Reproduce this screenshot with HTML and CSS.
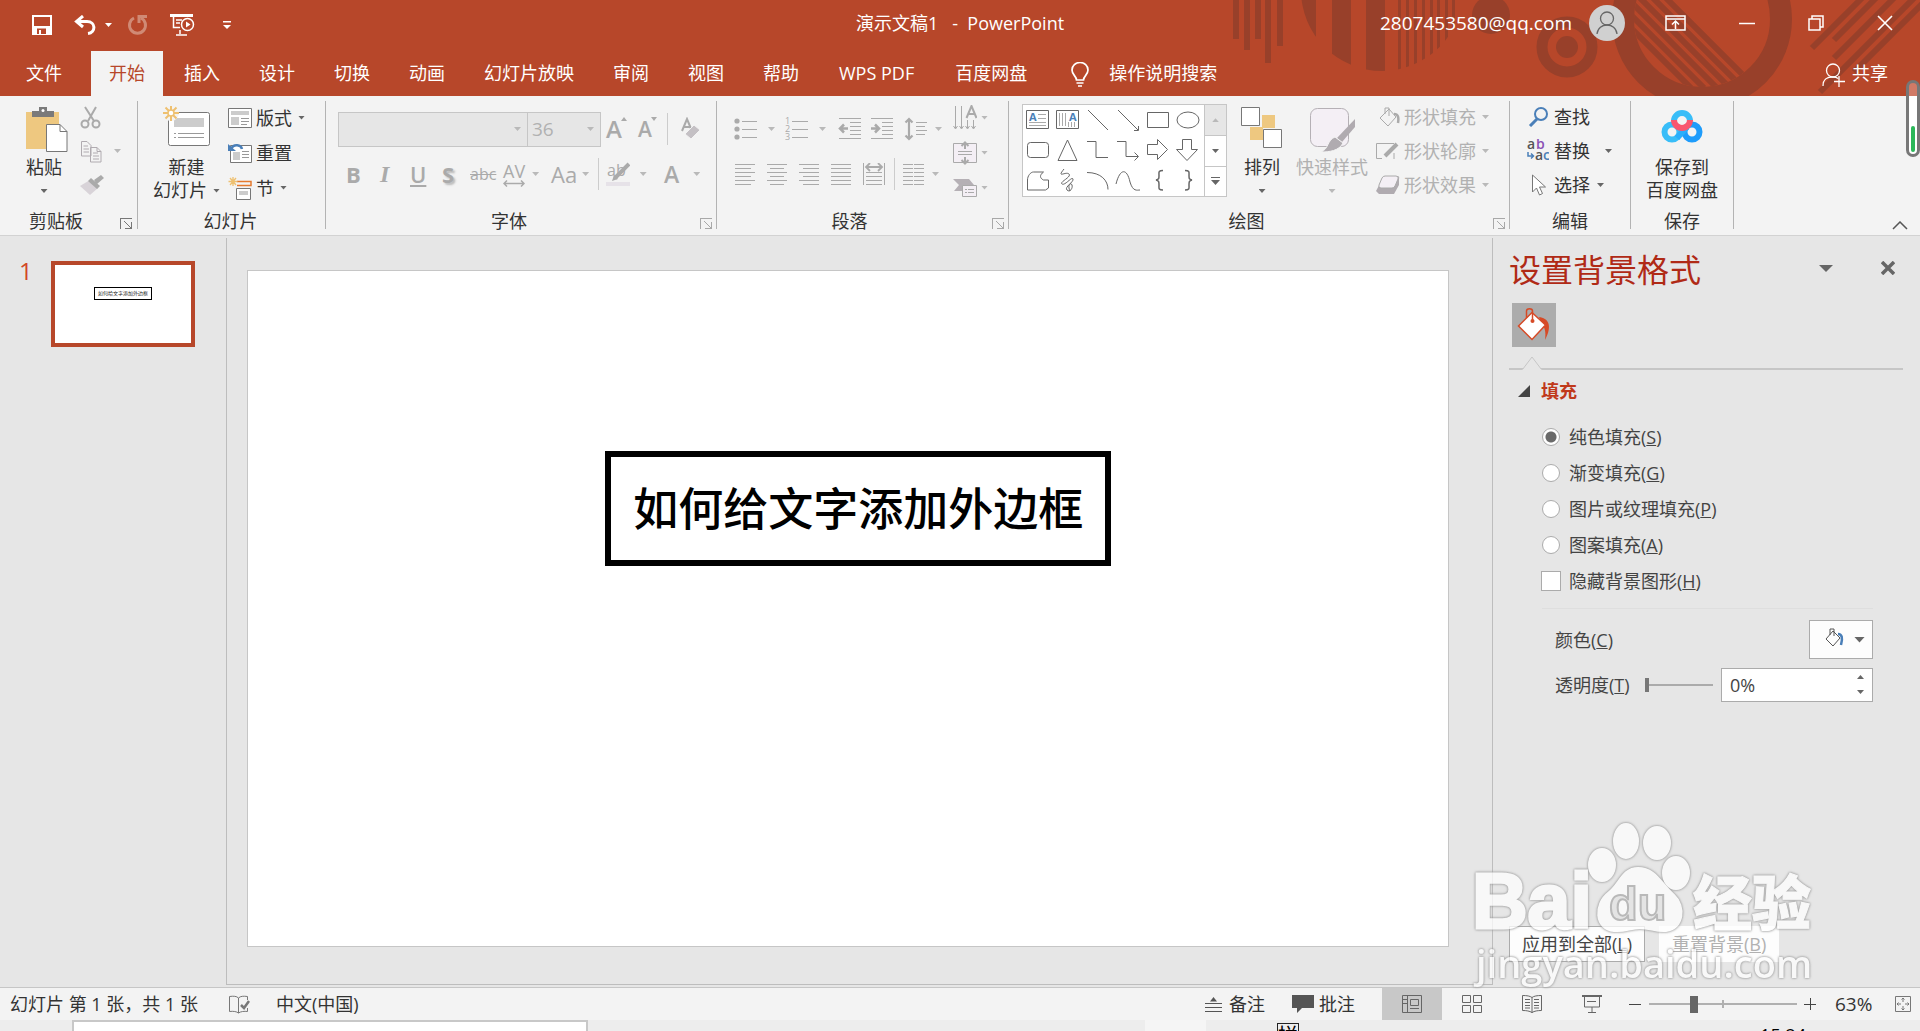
FILE: index.html
```html
<!DOCTYPE html>
<html lang="zh-CN">
<head>
<meta charset="utf-8">
<title>演示文稿1 - PowerPoint</title>
<link rel="stylesheet" href="styles.css">
</head>
<body>
<header class="top">
  <svg class="art" width="690" height="96" viewBox="0 0 690 96" aria-hidden="true">
    <defs>
      <clipPath id="c1"><circle cx="152" cy="-10" r="81"/></clipPath>
      <clipPath id="c2"><circle cx="472" cy="19" r="68"/></clipPath>
    </defs>
    <path d="M3 0h6v39H3zM14 0h6v50h-6zM25 0h6v39h-6zM35 0h6v63h-6zM47 0h6v46h-6z"/>
    <path clip-path="url(#c1)" d="M70 0h16v80H70zM102 0h19v80h-19zM136 0h19v80h-19zM168 0h3v80h-3zM176 0h3v80h-3zM184 0h3v80h-3zM192 0h3v80h-3zM200 0h3v80h-3zM207 0h3v80h-3zM215 0h3v80h-3zM222 0h3v80h-3z"/>
    <circle cx="261" cy="15" r="19"/>
    <circle cx="337" cy="47" r="25" class="ring"/>
    <circle cx="337" cy="47" r="11"/>
    <circle cx="472" cy="19" r="79" class="big"/>
    <g clip-path="url(#c2)" class="diag"><path d="M436-2l90 90M423-2l90 90M410-2l90 90M397-2l90 90M384-2l90 90M371-2l90 90"/></g>
    <path class="diag" d="M632-2l-50 50M646-2l-42 42M664-2l-60 60M690-8l-100 100M704-8l-80 80"/>
  </svg>
  <div class="titlebar">
    <div class="quick">
      <button aria-label="保存"><svg width="20" height="20" viewBox="0 0 20 20"><path d="M0 0h20v20H0z" fill="#fff"/><path d="M2 2h16v9H2zM5 13.500h9V19H9v-4H7v4H5z" fill="#b7472a"/></svg></button>
      <button aria-label="撤消"><svg width="23" height="20" viewBox="0 0 23 20" fill="none" stroke="#fff" stroke-width="3"><path d="M3 6.500h10c9 0 9 11 1 12M9 1L2.500 6.500 9 12"/></svg></button>
      <i class="car white"></i>
      <button aria-label="恢复"><svg width="21" height="20" viewBox="0 0 21 20" fill="none" stroke="#d08a75" stroke-width="3"><path d="M7 3a8 8 0 1 0 7 0M12 8V1.500h8"/></svg></button>
      <button aria-label="从头开始"><svg width="25" height="22" viewBox="0 0 25 22" fill="none" stroke="#fff" stroke-width="1.500"><path d="M0 1.500h23" stroke-width="3"/><path d="M3.500 3v10.500H10M6 6h6M6 9h4M10 16v4M6 21h11"/><circle cx="17.500" cy="10.500" r="6"/><path d="M16 7.500v6l4.500-3z" fill="#fff" stroke="none"/></svg></button>
      <button aria-label="自定义快速访问工具栏"><svg width="8" height="8" viewBox="0 0 8 8" fill="#fff"><path d="M0 0h8v1.500H0zM0 4h8L4 8z"/></svg></button>
    </div>
    <div class="doc">演示文稿1&nbsp;&nbsp; -&nbsp; PowerPoint</div>
    <div class="account">
      <span class="mail">2807453580@qq.com</span>
      <svg class="avatar" width="36" height="36" viewBox="0 0 36 36"><circle cx="18" cy="18" r="18" fill="#d0d0d0"/><g fill="none" stroke="#666" stroke-width="1.300"><circle cx="18" cy="13.500" r="6.500"/><path d="M8 29c1-12 19-12 20 0"/></g></svg>
      <button aria-label="功能区显示选项"><svg width="21" height="16" viewBox="0 0 21 16" fill="none" stroke="#fff" stroke-width="1.500"><path d="M1 1h19v14H1zM1 4h19M10.500 14V6M7 9.500L10.500 6 14 9.500"/></svg></button>
      <button aria-label="最小化"><svg width="16" height="16" viewBox="0 0 16 16" stroke="#fff" stroke-width="1.500"><path d="M0 8.500h16"/></svg></button>
      <button aria-label="还原"><svg width="16" height="16" viewBox="0 0 16 16" fill="none" stroke="#fff" stroke-width="1.500"><path d="M1 4h11v11H1zM4 4V1h11v11h-3"/></svg></button>
      <button aria-label="关闭"><svg width="16" height="16" viewBox="0 0 16 16" stroke="#fff" stroke-width="1.600"><path d="M1 1l14 14M15 1L1 15"/></svg></button>
    </div>
  </div>
  <nav class="tabs">
    <button class="file">文件</button>
    <button class="on">开始</button><button>插入</button><button>设计</button><button>切换</button><button>动画</button><button>幻灯片放映</button><button>审阅</button><button>视图</button><button>帮助</button><button class="addin">WPS PDF</button><button class="addin">百度网盘</button>
    <button class="tell"><svg width="18" height="25" viewBox="0 0 18 25" fill="none" stroke="#fff" stroke-width="1.700"><path d="M5.500 18c0-4-4.500-5-4.500-10a8 7.500 0 0 1 16 0c0 5-4.500 6-4.500 10zM5.500 21h7M7 24h4"/></svg>操作说明搜索</button>
    <button class="share"><svg width="24" height="24" viewBox="0 0 24 24" fill="none" stroke="#fff" stroke-width="1.300"><circle cx="11" cy="7.500" r="6.500"/><path d="M1 23c0-8 5-9 10-9 2 0 4 .5 5 1.500M17 13v11M12 18.500h11"/></svg>共享</button>
  </nav>
</header>

<section class="ribbon" aria-label="开始">
  <div class="group clip">
    <div class="body">
      <button class="large"><svg width="42" height="46" viewBox="0 0 42 46"><path d="M0 6h33v37H0z" fill="#eec880"/><path d="M6 11V5h7V1h8v4h7v6z" fill="#7a7a7a"/><circle cx="17" cy="4.500" r="1.500" fill="#fff"/><path d="M20.500 18.500H34l7 7V45.500H20.500z" fill="#fff" stroke="#777"/><path d="M34 18.500v7h7" fill="none" stroke="#777"/></svg>粘贴<i class="car"></i></button>
      <div class="stack">
        <button class="row off" aria-label="剪切"><svg width="22" height="23" viewBox="0 0 22 23" fill="none" stroke="#aaa" stroke-width="2"><path d="M5 1l9 14M16 1L8 15"/><circle cx="5" cy="18" r="3.500"/><circle cx="16" cy="18" r="3.500"/></svg></button>
        <button class="row off" aria-label="复制"><svg width="22" height="23" viewBox="0 0 22 23" fill="#f3f3f3" stroke="#b0abb0"><path d="M1.500 1.500H7l4 4V16H1.500zM10.500 7.500H17l4 4v10.500H10.500zM17 7.500v4h4M13 13h5M13 16h6M13 19h6M3.500 6H8M3.500 9H9M3.500 12H9"/></svg><i class="car"></i></button>
        <button class="row off" aria-label="格式刷"><svg width="24" height="22" viewBox="0 0 24 22"><path d="M10 6l8 8-8 7L0 12z" fill="#d8d3d8"/><path d="M8 7l3-3 9 8-3 3zM14 6l7-5 3 3-7 6z" fill="#aaa"/></svg></button>
      </div>
    </div>
    <h3>剪贴板</h3><i class="launch"></i>
  </div>
  <div class="group slides">
    <div class="body">
      <button class="large"><svg width="48" height="46" viewBox="0 0 48 46"><rect x="5.500" y="6.500" width="41" height="33" rx="2" fill="#fff" stroke="#777"/><path d="M11 12h30v9H11z" fill="#ccc"/><path d="M11 27.500h2M15 27.500h26M11 31.500h2M15 31.500h26" stroke="#999"/><circle cx="8" cy="7" r="8" fill="#f3f3f3"/><path d="M8-1v16M0 7h16M2.500 1.500l11 11M13.500 1.500l-11 11" stroke="#eec070" stroke-width="2"/><circle cx="8" cy="7" r="3" fill="#fff" stroke="#eec070" stroke-width="1.500"/></svg>新建<span>幻灯片<i class="car"></i></span></button>
      <div class="stack">
        <button class="row"><svg width="24" height="20" viewBox="0 0 24 20"><path d="M.5.5h23v19H.5z" fill="#fff" stroke="#777"/><path d="M3 3h18v4H3zM3 9h8v8H3z" fill="#ccc"/><path d="M13 10.500h8M13 13.500h8M13 16.500h6" stroke="#999"/></svg>版式<i class="car"></i></button>
        <button class="row"><svg width="24" height="20" viewBox="0 0 24 20"><path d="M2.500 2.500h21v17h-21z" fill="#fff" stroke="#777"/><path d="M5 9h7v8H5z" fill="#ccc"/><path d="M14 8.500h7M14 11.500h7M14 14.500h7" stroke="#999"/><path d="M3 6c3-6 10-4 11 0" fill="none" stroke="#4a7fb8" stroke-width="2.500"/><path d="M0 1v7h8z" fill="#4a7fb8"/></svg>重置</button>
        <button class="row"><svg width="24" height="24" viewBox="0 0 24 24"><path d="M9 5.500h14v4H9" fill="none" stroke="#e57a2e" stroke-width="1.500"/><path d="M8.500 12.500h14v11h-14z" fill="#fff" stroke="#777"/><path d="M11 15h9v4h-9z" fill="#ccc"/><path d="M5 1v9M.5 5.500h9M2 2l6 7M8 2L2 9" stroke="#eec070" stroke-width="1.300"/></svg>节<i class="car"></i></button>
      </div>
    </div>
    <h3>幻灯片</h3>
  </div>
  <div class="group font off">
    <div class="tools">
      <div class="line1">
        <select class="combo" aria-label="字体" disabled><option></option></select><select class="combo" aria-label="字号" disabled><option>36</option></select>
        <button class="g26" aria-label="增大字号">A<svg width="6" height="4" viewBox="0 0 6 4"><path d="M0 4h6L3 0z" fill="#aaa"/></svg></button>
        <button class="g22" aria-label="减小字号">A<svg width="6" height="4" viewBox="0 0 6 4"><path d="M0 0h6L3 4z" fill="#aaa"/></svg></button>
        <i class="vline"></i>
        <button aria-label="清除所有格式"><svg width="20" height="24" viewBox="0 0 20 24"><path d="M1 14L6 2l5 12M3 10h6" fill="none" stroke="#aaa" stroke-width="2"/><path d="M13 8l6 5-9 9-6-5z" fill="#c4c0c4" stroke="#f3f3f3"/></svg></button>
      </div>
      <div class="line2">
        <button class="b">B</button><button class="it">I</button><button class="u">U</button><button class="s">S</button><button class="abc">abc</button>
        <button class="av"><span>AV<svg width="22" height="7" viewBox="0 0 22 7" fill="none" stroke="#aaa" stroke-width="1.500"><path d="M1 3.500h20M4 .5l-3 3 3 3M18 .5l3 3-3 3"/></svg></span><i class="car"></i></button>
        <button class="aa">Aa<i class="car"></i></button><i class="vline"></i>
        <button class="hl" aria-label="文本突出显示颜色"><span>ab</span><svg width="24" height="24" viewBox="0 0 24 24"><path d="M23 2l-14 14" stroke="#aaa" stroke-width="4"/><path d="M8 13l4 4-6 2z" fill="#aaa"/><path d="M0 20h24v4H0z" fill="#e6e2e8"/></svg><i class="car"></i></button>
        <button class="fc">A<i class="car"></i></button>
      </div>
    </div>
    <h3>字体</h3><i class="launch"></i>
  </div>
  <div class="group para off">
    <div class="body">
      <div class="tools">
        <div class="line1">
          <button aria-label="项目符号"><svg width="23" height="22" viewBox="0 0 23 22"><g fill="#aaa"><circle cx="3" cy="3" r="2.600"/><circle cx="3" cy="11" r="2.600"/><circle cx="3" cy="19" r="2.600"/></g><path d="M8 3.500h15M8 11.500h15M8 19.500h15" stroke="#aaa"/></svg><i class="car"></i></button>
          <button aria-label="编号"><svg width="23" height="24" viewBox="0 0 23 24"><text x="0" y="7" class="num">1</text><text x="0" y="15" class="num">2</text><text x="0" y="23" class="num">3</text><path d="M7 4.500h16M7 12.500h16M7 20.500h16" stroke="#aaa"/></svg><i class="car"></i></button>
          <button aria-label="降低列表级别"><svg width="23" height="22" viewBox="0 0 23 22" stroke="#aaa"><path d="M1 .5h22M12 4.500h11M12 8.500h11M12 12.500h11M12 16.500h11M1 20.500h22"/><path d="M10 10.500H2M6 6.500l-4 4 4 4" fill="none" stroke-width="2.500"/></svg></button>
          <button aria-label="提高列表级别"><svg width="23" height="22" viewBox="0 0 23 22" stroke="#aaa"><path d="M1 .5h22M12 4.500h11M12 8.500h11M12 12.500h11M12 16.500h11M1 20.500h22"/><path d="M1 10.500h8M5 6.500l4 4-4 4" fill="none" stroke-width="2.500"/></svg></button>
          <button aria-label="行距"><svg width="24" height="24" viewBox="0 0 24 24" stroke="#aaa"><path d="M12 5.500h11M12 9.500h9M12 13.500h11M12 17.500h9"/><path d="M5 2v20M1.500 5.500L5 2l3.500 3.500M1.500 18.500L5 22l3.500-3.500" fill="none" stroke-width="2.200"/></svg><i class="car"></i></button>
        </div>
        <div class="line2">
          <button aria-label="左对齐"><svg width="20" height="21" viewBox="0 0 20 21" stroke="#aaa"><path d="M0 .5h20M0 4.500h16M0 8.500h20M0 12.500h16M0 16.500h20M0 20.500h16"/></svg></button>
          <button aria-label="居中"><svg width="20" height="21" viewBox="0 0 20 21" stroke="#aaa"><path d="M0 .5h20M3 4.500h14M0 8.500h20M3 12.500h14M0 16.500h20M3 20.500h14"/></svg></button>
          <button aria-label="右对齐"><svg width="20" height="21" viewBox="0 0 20 21" stroke="#aaa"><path d="M0 .5h20M4 4.500h16M0 8.500h20M4 12.500h16M0 16.500h20M4 20.500h16"/></svg></button>
          <button aria-label="两端对齐"><svg width="20" height="21" viewBox="0 0 20 21" stroke="#aaa"><path d="M0 .5h20M0 4.500h20M0 8.500h20M0 12.500h20M0 16.500h20M0 20.500h20"/></svg></button>
          <button aria-label="分散对齐"><svg width="22" height="22" viewBox="0 0 22 22" stroke="#aaa" fill="none"><path d="M.5 0v22M21.500 0v22M3 9.500h16M3 13.500h16M3 17.500h16M3 21.500h16"/><path d="M3 4h16M7 0L3 4l4 4M15 0l4 4-4 4" stroke-width="1.800"/></svg></button>
          <i class="vline"></i>
          <button aria-label="分栏"><svg width="21" height="21" viewBox="0 0 21 21" stroke="#aaa"><path d="M0 .5h10M0 4.500h10M0 8.500h10M0 12.500h10M0 16.500h10M0 20.500h10M11 .5h10M11 4.500h10M11 8.500h10M11 12.500h10M11 16.500h10M11 20.500h10"/></svg><i class="car"></i></button>
        </div>
      </div>
      <div class="stack">
        <button class="row" aria-label="文字方向"><svg width="24" height="26" viewBox="0 0 24 26" fill="none" stroke="#aaa"><path d="M2.500 1v22M8.500 1v22M14.500 15v8M20.500 15v8M.5 21l2 3 2-3M6.500 21l2 3 2-3M12.500 21l2 3 2-3M18.500 21l2 3 2-3"/><path d="M13.500 13l5-12 5 12M15 9h7" stroke-width="2"/></svg><i class="car"></i></button>
        <button class="row" aria-label="对齐文本"><svg width="24" height="24" viewBox="0 0 24 24" fill="none" stroke="#aaa"><path d="M.5 2.500h23v19H.5z" fill="#f4eff5"/><path d="M5 10.500h14M5 13.500h14"/><path d="M12 8V2M8.500 5L12 1.500 15.500 5M12 16v6M8.500 19l3.500 3.500 3.500-3.500" stroke-width="2"/></svg><i class="car"></i></button>
        <button class="row" aria-label="转换为 SmartArt"><svg width="24" height="18" viewBox="0 0 24 18"><path d="M0 0h16l5 6H10v6H1l5-6z" fill="#b5b0b5"/><path d="M9.500 6.500h14v11h-14z" fill="#f4eff5" stroke="#aaa"/><path d="M12 10.500h2M15 10.500h6M12 13.500h2M15 13.500h6" stroke="#aaa"/></svg><i class="car"></i></button>
      </div>
    </div>
    <h3>段落</h3><i class="launch"></i>
  </div>
  <div class="group draw">
    <div class="body">
      <div class="gallery">
        <svg width="181" height="92" viewBox="1 0 181 92" fill="none" stroke="#666" stroke-width="1">
          <path d="M4.500 5.500h22v18h-22zM34.500 5.500h22v18h-22z"/>
          <path d="M16 9.500h8M16 13.500h8M7 17.500h17M7 20.500h17M37.500 8v13M40.500 8v13M43.500 8v13M46.500 17v5M49.500 17v5M52.500 17v5" stroke="#aaa"/>
          <text x="7" y="16" class="ga">A</text><text x="47" y="16" class="ga">A</text>
          <path d="M66 5l20 20M96 5l20 20M116.500 21v4.500H112M125.500 7.500h21v15h-21z"/><ellipse cx="166" cy="15" rx="11" ry="8"/>
          <rect x="5.500" y="37.500" width="21" height="15" rx="3"/><path d="M36 55.500L45.500 35 55 55.500zM65 36.500h9v16h12M95 36.500h9v15h12M112.500 47.500l4 4-4 4M125.500 39.500h10v-5l10 10-10 10v-5h-10zM160.500 34.500h9v10h6l-10.500 11-10.500-11h6z"/>
          <path d="M5.500 85V75c0-4 3-8 6-8h10c-4 3-4 6 0 8h5v8l-3 2zM42 64c-8 10 2 2 5 5s-10 8-7 10 10-8 11-5-9 8-6 11 6-2 5-5-5 0-2 6M65 67.500c14 0 21 8 21 17M94 79c4-16 11-16 14-2 3 10 7 8 10 8"/>
          <path d="M141 65.500c-5 0-4 2-4 5s0 4-3 4.500c3 .5 3 2 3 5s-1 5 4 5M163 65.500c5 0 4 2 4 5s0 4 3 4.500c-3 .5-3 2-3 5s1 5-4 5" stroke-width="1.500"/>
        </svg>
        <div class="gscroll"><button class="dis" aria-label="上一行"><i class="car up"></i></button><button aria-label="下一行"><i class="car"></i></button><button aria-label="其他"><svg width="9" height="8" viewBox="0 0 9 8" fill="#666"><path d="M0 0h9v1H0zM0 3h9L4.500 8z"/></svg></button></div>
      </div>
      <button class="large"><svg width="42" height="46" viewBox="0 0 42 46"><path d="M21 9h13v13H21zM9 21h13v13H9z" fill="#eec880"/><path d="M.5 1.500h18v18H.5zM22.500 23.500h18v18h-18z" fill="#fff" stroke="#777"/></svg>排列<i class="car"></i></button>
      <button class="large off"><svg width="46" height="46" viewBox="0 0 46 46"><rect x="1.500" y="2.500" width="38" height="38" rx="7" fill="#f4eff5" stroke="#b5b0b5"/><path d="M46 13v8L33 36l-5-4z" fill="#b0abb0"/><path d="M26 31l8 6c-4 8-14 9-22 9 8-3 6-12 14-15z" fill="#b0abb0" stroke="#f3f3f3"/></svg>快速样式<i class="car"></i></button>
      <div class="stack off">
        <button class="row"><svg width="24" height="22" viewBox="0 0 24 22" fill="none" stroke="#aaa"><path d="M13 3L4 12l8 8 8-9zM9 8V2h4v8"/><path d="M18 8c4 0 5 3 4 9" stroke-width="2.500"/></svg>形状填充<i class="car"></i></button>
        <button class="row"><svg width="24" height="20" viewBox="0 0 24 20" fill="none" stroke="#aaa"><path d="M18 2.500H.500v15H6M18 12v6"/><path d="M9 15L21 3" stroke-width="4"/></svg>形状轮廓<i class="car"></i></button>
        <button class="row"><svg width="24" height="20" viewBox="0 0 24 20"><path d="M8 1h13q3 0 2 3v6l-5 9H3l-3-3z" fill="#b0abb0"/><path d="M9 1h11q3 0 2 3l-3 7q-1 2-3 2H5q-3 0-2-3l3-7q1-2 3-2z" fill="#f4eff5" stroke="#aaa"/></svg>形状效果<i class="car"></i></button>
      </div>
    </div>
    <h3>绘图</h3><i class="launch dim"></i>
  </div>
  <div class="group edit">
    <div class="body">
      <div class="stack">
        <button class="row"><svg width="22" height="20" viewBox="0 0 22 20" fill="none" stroke="#4a7fb8"><circle cx="14" cy="7" r="6" stroke-width="2"/><path d="M10 12l-7 7" stroke-width="3"/></svg>查找</button>
        <button class="row"><svg width="22" height="24" viewBox="0 0 22 24" class="rep"><text x="0" y="10" fill="#555">a</text><text x="9" y="10" fill="#8a50b5">b</text><text x="8" y="21" fill="#555">a</text><text x="16" y="21" fill="#4a7fb8">c</text><path d="M1 13v4h5M4 14.500L6.500 17 4 19.500" fill="none" stroke="#4a7fb8" stroke-width="1.500"/></svg>替换<i class="car far"></i></button>
        <button class="row"><svg width="22" height="24" viewBox="0 0 22 24"><path d="M5.500 2v17l4-4 3 7 3-1.500-3-6.500h6z" fill="#fff" stroke="#777"/></svg>选择<i class="car"></i></button>
      </div>
    </div>
    <h3>编辑</h3>
  </div>
  <div class="group save">
    <div class="body">
      <button class="large"><svg width="42" height="46" viewBox="0 0 42 46" fill="none" stroke-width="6"><circle cx="11" cy="26" r="7.500" stroke="#38bdf8"/><circle cx="31" cy="26" r="7.500" stroke="#1e9cfb"/><path d="M16 32l10-11" stroke="#2aaefb"/><path d="M13 15a8 8 0 0 1 16 0" stroke="#38bdf8"/><path d="M13 14a8 8 0 0 0 16 0" stroke="#f9566f"/></svg>保存到<span>百度网盘</span></button>
    </div>
    <h3>保存</h3>
  </div>
  <button class="collapse" aria-label="折叠功能区"><svg width="16" height="9" viewBox="0 0 16 9" fill="none" stroke="#555" stroke-width="1.500"><path d="M1 8l7-7 7 7"/></svg></button>
</section>

<main class="work">
  <aside class="thumbs"><span>1</span><div class="thumb"><div>如何给文字添加外边框</div></div></aside>
  <section class="canvas"><div class="slide"><div class="textbox">如何给文字添加外边框</div></div></section>
  <aside class="pane">
    <div class="phead"><h2>设置背景格式</h2><button aria-label="任务窗格选项"><svg width="14" height="7" viewBox="0 0 14 7"><path d="M0 0h14L7 7z" fill="#666"/></svg></button><button aria-label="关闭"><svg width="14" height="14" viewBox="0 0 14 14" stroke="#666" stroke-width="3.500"><path d="M1 1l12 12M13 1L1 13"/></svg></button></div>
    <button class="tile" aria-label="填充"><svg width="44" height="44" viewBox="0 0 44 44"><path d="M27 14c9 1 14 8 6 23 1-8 0-12-3-16z" fill="#d64a26"/><path d="M20 9.500L6.500 23 20 36.500 33.500 22z" fill="#fff" stroke="#d64a26" stroke-width="1.500"/><path d="M14.500 15V8c0-3 6-3 6 0v9" fill="none" stroke="#d64a26" stroke-width="1.500"/><circle cx="20.500" cy="18" r="2" fill="#d64a26"/></svg></button>
    <div class="notch"><svg width="20" height="14" viewBox="0 0 20 14"><path d="M0 14L10 1l10 13z" fill="#e6e6e6"/><path d="M.5 13.500L10 1l9.500 12.500" fill="none" stroke="#c6c6c6"/></svg></div>
    <div class="sect"><svg width="12" height="12" viewBox="0 0 12 12"><path d="M12 0v12H0z" fill="#444"/></svg>填充</div>
    <form class="opts">
      <label><input type="radio" name="f" checked><span>纯色填充(<u>S</u>)</span></label>
      <label><input type="radio" name="f"><span>渐变填充(<u>G</u>)</span></label>
      <label><input type="radio" name="f"><span>图片或纹理填充(<u>P</u>)</span></label>
      <label><input type="radio" name="f"><span>图案填充(<u>A</u>)</span></label>
      <label><input type="checkbox"><span>隐藏背景图形(<u>H</u>)</span></label>
      <hr>
      <div class="field"><span>颜色(<u>C</u>)</span><button type="button" class="color" aria-label="颜色"><svg width="22" height="22" viewBox="0 0 22 22" fill="none" stroke="#555"><path d="M10 4L3 12l7 7 7-8zM7 8V2h4v7"/><path d="M15 7c4 0 5 4 3 11" stroke="#4a7fb8" stroke-width="2.500"/></svg><i class="car"></i></button></div>
      <div class="field"><label for="tr">透明度(<u>T</u>)</label><input type="range" id="tr" value="0"><div class="spin"><input type="text" value="0%" aria-label="透明度"><div><i class="car up"></i><i class="car"></i></div></div></div>
    </form>
    <div class="pfoot"><button>应用到全部(<u>L</u>)</button><button class="dis" disabled>重置背景(<u>B</u>)</button></div>
    <svg class="mark" width="350" height="175" viewBox="0 0 350 175" aria-hidden="true">
      <text x="5" y="112" class="m1">Bai</text>
      <text x="226" y="109" class="m2">经验</text>
      <text x="9" y="162" class="m3">jingyan.baidu.com</text>
      <g class="paw"><ellipse cx="135" cy="49" rx="13" ry="16"/><ellipse cx="159" cy="25" rx="12" ry="17"/><ellipse cx="190" cy="27" rx="13" ry="16"/><ellipse cx="209" cy="57" rx="13" ry="16"/><path d="M171 52c-16 0-18 16-30 25-14 11-14 36 6 38 12 1 16-3 26-3s16 4 26 3c18-2 20-25 8-36-13-11-18-27-36-27z"/></g>
      <text x="142" y="104" class="m4">du</text>
    </svg>
  </aside>
</main>

<footer class="status">
  <span class="count">幻灯片 第 1 张，共 1 张</span>
  <svg width="21" height="19" viewBox="0 0 21 19" fill="none" stroke="#777"><path d="M9.500 18V3c-2-2-5-2-9-1.500v15c4-.500 7 0 9 1.500 2-1.500 6-2 9-1.500V13M9.500 3c2-2 5-2 9-1.500V5"/><path d="M12 10l3 3 5-7" stroke-width="2.500"/></svg>
  <span class="lang">中文(中国)</span>
  <div class="right">
    <button><svg width="17" height="15" viewBox="0 0 17 15" stroke="#555"><path d="M0 6.500h17M0 10.500h17M0 14.500h17"/><path d="M5 4.500h7L8.500 0z" fill="#555" stroke="none"/></svg>备注</button>
    <button class="cm"><svg width="22" height="18" viewBox="0 0 22 18"><path d="M0 0h22v13H10l-5 5v-5H0z" fill="#555"/></svg>批注</button>
    <button class="view on" aria-label="普通"><svg width="20" height="18" viewBox="0 0 20 18" fill="none" stroke="#666"><path d="M.5.5h19v17H.5zM5.500 1v16M8.500 4.500h8v6h-8zM8 13.500h9M1 4.500h4M1 8.500h4"/></svg></button>
    <button class="view" aria-label="幻灯片浏览"><svg width="20" height="18" viewBox="0 0 20 18" fill="none" stroke="#666"><path d="M.5.5h8v7h-8zM11.500.5h8v7h-8zM.5 10.500h8v7h-8zM11.500 10.500h8v7h-8z"/></svg></button>
    <button class="view" aria-label="阅读视图"><svg width="20" height="18" viewBox="0 0 20 18" fill="none" stroke="#666"><path d="M10 2.500C8 1 5 .5.500.5v15c4 0 7 .500 9.500 2 2.500-1.500 5.500-2 9.500-2V.5C15 .5 12 1 10 2.500zV18M3 4.500h5M3 7.500h5M3 10.500h5M3 13h5M12 4.500h5M12 7.500h5M12 10.500h5M12 13h5"/></svg></button>
    <button class="view" aria-label="幻灯片放映"><svg width="20" height="18" viewBox="0 0 20 18" fill="none" stroke="#666"><path d="M0 1h20" stroke-width="2"/><path d="M2.500 2v10h15V2M5 6.500h9M10 12v5M6 17.500h8"/></svg></button>
    <button class="z" aria-label="缩小"><svg width="12" height="12" viewBox="0 0 12 12" stroke="#444"><path d="M0 6.500h12"/></svg></button>
    <input type="range" class="zoom" aria-label="显示比例" min="0" max="100" value="29">
    <button class="z" aria-label="放大"><svg width="12" height="12" viewBox="0 0 12 12" stroke="#444"><path d="M0 6.500h12M6.500 0v12"/></svg></button>
    <span class="pct">63%</span>
    <button class="z" aria-label="适应窗口"><svg width="16" height="16" viewBox="0 0 16 16" fill="none" stroke="#777"><path d="M.5.5h15v15H.5zM8 2v4M8 10v4M2 8h4M10 8h4M6.500 3.500L8 2l1.500 1.500M6.500 12.500L8 14l1.500-1.500M3.500 6.500L2 8l1.500 1.500M12.500 6.500L14 8l-1.500 1.500"/></svg></button>
  </div>
</footer>
<div class="taskbar"><input type="text" aria-label="搜索"><i class="lit"></i><span class="ime">拼</span><span class="clock">15:24</span></div>
<div class="meter" aria-hidden="true"><i></i></div>
</body>
</html>
```
FILE: styles.css
```css
* { box-sizing: border-box; }
body { margin: 0; height: 100vh; overflow: hidden; display: flex; flex-direction: column; position: relative; font: 18px/24px "Open Sans", "Noto Sans CJK SC", sans-serif; color: #333; background: #e6e6e6; }
button { font: inherit; color: inherit; background: none; border: 0; padding: 0; margin: 0; display: flex; align-items: center; white-space: nowrap; }
svg { display: block; flex: none; }
h2, h3 { margin: 0; font-weight: 400; }
.car { display: block; flex: none; width: 7px; height: 4px; background: #666; clip-path: polygon(0 0, 100% 0, 50% 100%); }
.car.up { clip-path: polygon(50% 0, 100% 100%, 0 100%); }
.car.white { background: #fff; }
.off { color: #b1b1b1; }
.off .car, .dis .car { background: #b9b9b9; }

/* title bar and tabs */
.top { position: relative; flex: none; background: #b7472a; color: #fff; }
.art { position: absolute; right: 0; top: 0; fill: #98402a; }
.art .ring { fill: none; stroke: #98402a; stroke-width: 11; }
.art .big { fill: none; stroke: #98402a; stroke-width: 22; }
.art .diag { fill: none; stroke: #98402a; stroke-width: 6; }
.titlebar { position: relative; height: 51px; padding-bottom: 5px; display: grid; grid-template-columns: 1fr auto 1fr; align-items: center; }
.quick { display: flex; align-items: center; padding: 4px 0 0 32px; gap: 22px; }
.quick .car { margin: 0 -7px 0 -14px; }
.quick button:last-child { margin-left: 6px; }
.account { display: flex; align-items: center; justify-content: flex-end; padding-right: 27px; gap: 53px; }
.account .mail { margin-right: -36px; font-size: 19px; }
.account .avatar { margin-right: -13px; }
.tabs { position: relative; height: 45px; display: flex; gap: 3px; }
.tabs button { padding: 0 18px 2px; }
.tabs .file { padding: 0 26px 2px; }
.tabs .addin { padding: 0 19px 2px; }
.tabs .on { background: #f3f3f3; color: #b7472a; }
.tabs .tell { gap: 20px; margin-left: 4px; }
.tabs svg { margin-top: 4px; }
.tabs .share { margin-left: auto; gap: 6px; padding: 0 32px 2px 0; }

/* ribbon */
.ribbon { flex: none; display: flex; height: 140px; background: #f3f3f3; border-bottom: 1px solid #d2d2d2; }
.group { position: relative; display: flex; flex-direction: column; background: linear-gradient(#b3b3b3, #b3b3b3) right 5px / 1px 128px no-repeat; }
.group h3 { font-size: 18px; line-height: 28px; text-align: center; color: #333; }
.body { display: flex; height: 111px; }
.group > .tools { height: 111px; }
.launch { position: absolute; right: 5px; bottom: 6px; width: 12px; height: 11px; border: 1px solid #777; border-width: 1px 0 0 1px; background: linear-gradient(to top right, transparent 44%, #777 44% 56%, transparent 56%) 3px 2px / 7px 7px no-repeat, linear-gradient(#777, #777) 10px 3px / 1px 7px no-repeat, linear-gradient(#777, #777) 4px 9px / 7px 1px no-repeat; }
.off > .launch, .launch.dim { opacity: .6; }
.large { flex-direction: column; align-items: center; padding-top: 10px; line-height: 23px; }
.large svg { margin-bottom: 4px; }
.large > .car { margin-top: 10px; }
.large span { display: flex; align-items: center; gap: 6px; }
.stack { padding-top: 4px; }
.row { height: 34px; gap: 6px; }
.slides .row, .para .row { height: 35px; }
.row svg { margin-right: -2px; }
.tools { padding-top: 15px; display: grid; grid-template-rows: 36px 36px; row-gap: 9px; }
.line1, .line2 { display: flex; align-items: center; }
.line1 button, .line2 button { gap: 11px; flex: none; }
.vline { width: 1px; height: 32px; background: #ccc; }

.clip { width: 138px; padding-left: 20px; }
.clip h3 { padding-right: 46px; }
.clip .body { gap: 12px; }
.clip .large svg { margin-left: 6px; }
.clip .row .car { margin-left: 8px; }
.clip > .launch { right: 6px; }
.slides { width: 188px; padding-left: 15px; }
.slides h3 { padding-right: 18px; }
.slides .body { gap: 8px; }

.font { width: 391px; padding-left: 12px; }
.font h3 { padding-right: 37px; }
.combo { appearance: none; width: 190px; height: 35px; margin: 0 -1px 0 0; padding: 0 4px; border: 1px solid #c6c6c6; border-radius: 0; color: #b1b1b1; opacity: 1; font: inherit; background: #e6e6e6 url("data:image/svg+xml,%3Csvg xmlns='http://www.w3.org/2000/svg' width='7' height='4'%3E%3Cpath d='M0 0h7L3.500 4z' fill='%23b9b9b9'/%3E%3C/svg%3E") right 6px center no-repeat; }
.combo + .combo { width: 74px; font-size: 19px; }
.line1 .g26, .line1 .g22 { gap: 0; font-size: 24px; font-weight: 600; width: 32px; color: #aaa; }
.line1 .g26 { margin-left: 6px; }
.line1 .g22 { font-size: 21px; }
.g26 svg, .g22 svg { align-self: flex-start; margin-left: -1px; }
.font .line1 .vline { margin: 0 13px 0 -3px; }
.font .line2 { display: grid; grid-template-columns: 32px 32px 32px 28px 33px 48px 47px 9px 54px 45px; padding-left: 8px; color: #aaa; font-size: 22px; }
.line2 .b, .line2 .u, .line2 .s { font-weight: 700; }
.line2 .u { text-decoration: underline; font-weight: 600; }
.line2 .s { text-shadow: 2px 2px 2px #bbb; }
.line2 .it { font-family: "Liberation Serif", serif; font-style: italic; font-weight: 700; font-size: 24px; padding-left: 2px; }
.line2 .abc { font-size: 16px; text-decoration: line-through; }
.line2 .av { font-size: 18px; line-height: 18px; gap: 7px; }
.line2 .aa { gap: 5px; font-size: 22px; }
.line2 .fc { gap: 14px; padding-left: 3px; font-size: 23px; font-weight: 600; }
.line2 .hl { font-size: 16px; gap: 10px; }
.hl span { align-self: flex-start; line-height: 16px; margin-right: -30px; }

.para { width: 292px; padding-left: 17px; }
.para h3 { padding-right: 44px; }
.para .line1 { display: grid; grid-template-columns: 51px 53px 32px 34px 48px; }
.para .line2 { display: grid; grid-template-columns: 32px 32px 32px 32px 31px 9px 50px; padding-left: 1px; }
.para .line2 button:last-child { gap: 8px; }
.para .line1 button:last-child { gap: 7px; }
.num { font: 9px "Open Sans", sans-serif; fill: #aaa; }

.draw { width: 501px; padding-left: 13px; }
.draw h3 { padding-right: 39px; }
.gallery { display: flex; height: 93px; margin-top: 8px; border: 1px solid #c6c6c6; background: #fff; }
.gscroll { width: 22px; display: grid; grid-template-rows: 1fr 1fr 1fr; border-left: 1px solid #c6c6c6; }
.gscroll button { justify-content: center; }
.gscroll button + button { border-top: 1px solid #c6c6c6; }
.gscroll .dis { background: #e6e6e6; }
.ga { font: bold 11px "Open Sans", sans-serif; fill: #4a7fb8; stroke: none; }
.draw .body > .large { margin-left: 14px; }
.draw .body > .large + .large { margin-left: 13px; }
.draw .stack { margin-left: 8px; }
.edit { width: 121px; padding-left: 17px; }
.edit h3 { padding-right: 18px; }
.edit .row { gap: 7px; }
.edit .far { margin-left: 8px; }
.rep { font: 600 14px "Open Sans", sans-serif; }
.save { width: 103px; padding-left: 15px; }
.save h3 { padding-right: 16px; }
.collapse { align-self: flex-end; margin: 0 12px 5px auto; }

/* work area */
.work { flex: 1; min-height: 0; display: flex; padding: 2px 0; }
.thumbs { flex: none; width: 227px; display: flex; align-items: flex-start; border-right: 1px solid #bdbdbd; padding: 23px 0 0 19px; color: #d24726; font-size: 24px; }
.thumbs span { width: 32px; line-height: 20px; }
.thumb { width: 144px; height: 86px; border: 4px solid #b7472a; background: #fff; padding-top: 22px; }
.thumb div { width: 58px; margin: 0 auto; border: 1px solid #000; color: #222; font-size: 5px; line-height: 11px; text-align: center; white-space: nowrap; }
.canvas { flex: 1; min-width: 0; padding: 32px 43px 0 20px; border-bottom: 1px solid #bdbdbd; }
.slide { aspect-ratio: 1202 / 677; padding: 15% 28% 0 29.7%; background: #fff; border: 1px solid #c6c6c6; }
.textbox { border: 6px solid #000; padding-bottom: 4px; color: #000; font: 500 45px/99px "Noto Sans CJK SC", sans-serif; text-align: center; white-space: nowrap; }
.pane { position: relative; flex: none; width: 428px; display: flex; flex-direction: column; border-left: 1px solid #bdbdbd; padding: 12px 17px 23px 16px; }
.phead { display: flex; align-items: center; }
.phead h2 { flex: 1; font-size: 32px; line-height: 40px; color: #b02a16; }
.phead button { margin-bottom: 4px; }
.phead button + button { margin: 0 8px 4px 48px; }
.tile { width: 44px; height: 44px; margin: 13px 0 0 3px; background: #acacac; }
.notch { height: 23px; padding: 9px 0 0 13px; border-bottom: 2px solid #c6c6c6; }
.sect { display: flex; align-items: center; gap: 11px; padding-left: 9px; margin-top: 9px; color: #c0391b; font-weight: 700; }
.opts { padding: 16px 30px 0 33px; color: #444; }
.opts > label { display: flex; align-items: center; gap: 9px; height: 36px; }
.opts input[type=radio], .opts input[type=checkbox] { appearance: none; width: 18px; height: 18px; margin: 0; border: 1px solid #ababab; background: #fff; }
.opts input[type=radio] { border-radius: 50%; }
.opts input[type=checkbox] { width: 20px; height: 20px; margin: 0 -1px 0 -1px; }
.opts input:checked { background: radial-gradient(#6a6a6a 5px, #fff 6px); }
hr { width: 100%; border: 0; border-top: 1px solid #dedede; margin: 9px 0 11px; }
.field { display: flex; align-items: center; padding-left: 13px; height: 39px; margin-bottom: 6px; }
.color { margin-left: auto; width: 64px; height: 39px; padding: 0 8px 4px 13px; gap: 9px; border: 1px solid #ababab; background: #fdfdfd; }
.color .car { width: 11px; height: 6px; margin-top: 4px; }
.field input[type=range] { appearance: none; width: 68px; height: 16px; margin: 0 8px 0 auto; background: linear-gradient(#ababab, #ababab) center / 100% 2px no-repeat; }
.field input[type=range]::-webkit-slider-thumb { appearance: none; width: 4px; height: 14px; background: #777; }
.spin { display: flex; align-items: center; width: 152px; height: 34px; border: 1px solid #ababab; background: #fff; padding: 0 8px; }
.spin input { flex: 1; min-width: 0; border: 0; padding: 0; background: none; font: inherit; color: #444; }
.spin div { display: grid; gap: 11px; }
.pfoot { display: flex; gap: 14px; margin-top: auto; color: #444; }
.pfoot button { height: 36px; padding: 0 12px; border: 1px solid #ababab; background: #fdfdfd; }
.pfoot .dis { color: #b1b1b1; border-color: #fdfdfd; }
.mark { position: absolute; left: -26px; bottom: -6px; fill: #fff; stroke: #fff; stroke-width: 2; opacity: .75; overflow: visible; filter: drop-shadow(0 0 1px #888) drop-shadow(0 0 1px #aaa); }
.m1 { font: bold 77px "Liberation Sans", sans-serif; stroke-width: 3; }
.m2 { font: 900 59px "Noto Sans CJK SC", sans-serif; stroke-width: 1; }
.m3 { font: 600 38px "Open Sans", sans-serif; stroke-width: 0; }
.m4 { font: bold 47px "Liberation Sans", sans-serif; fill: #e4e4e4; stroke-width: 2; stroke: #aaa; }

/* status bar */
.status { flex: none; height: 33px; display: flex; align-items: center; padding: 0 9px 0 10px; background: #f3f3f3; border-top: 1px solid #c6c6c6; }
.count { margin-right: 31px; }
.lang { margin-left: 26px; }
.right { margin-left: auto; display: flex; align-items: center; height: 100%; }
.right button { gap: 7px; }
.right .cm { margin: 0 27px; gap: 5px; }
.right .view { width: 60px; height: 100%; justify-content: center; }
.right .on { background: #c8c8c8; }
.right .z { margin: 0 8px 0 7px; }
.zoom { appearance: none; width: 148px; height: 18px; margin: 0; background: linear-gradient(#b0b0b0, #b0b0b0) center / 100% 2px no-repeat, linear-gradient(#b0b0b0, #b0b0b0) center / 2px 8px no-repeat; }
.zoom::-webkit-slider-thumb { appearance: none; width: 8px; height: 17px; background: #666; }
.pct { width: 60px; margin-left: 11px; font-size: 19px; }
.right .z:last-child { margin: 0; }
.taskbar { flex: none; height: 11px; overflow: hidden; display: flex; align-items: flex-start; background: #ededed; padding-right: 114px; }
.taskbar input { width: 516px; height: 40px; margin-left: 72px; border: 2px solid #c8c8c8; background: #fff; padding: 0; }
.lit { width: 61px; height: 11px; margin-left: 557px; background: #f5f5f5; }
.ime { margin: 3px auto 0 71px; border: 1px solid #222; font-size: 20px; line-height: 24px; color: #000; }
.clock { margin-top: 3px; color: #000; line-height: 24px; }
.meter { position: absolute; right: 0; top: 80px; width: 14px; height: 77px; border: 3px solid #777; border-radius: 7px; background: linear-gradient(#d17a66 13px, #fff 13px); padding: 43px 2px 0; }
.meter i { display: block; height: 26px; border-radius: 2px; background: #2cb85a; }
```
